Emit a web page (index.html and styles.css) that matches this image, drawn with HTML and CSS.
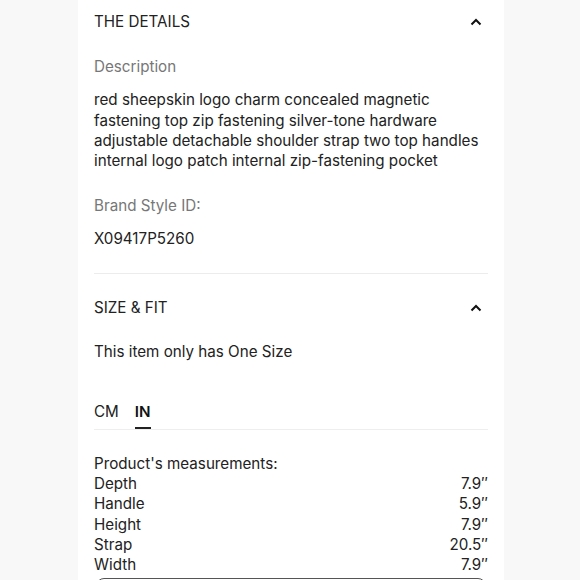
FILE: index.html
```html
<!DOCTYPE html>
<html>
<head>
<meta charset="utf-8">
<link rel="stylesheet" href="styles.css">
</head>
<body>
<div class="panel">
  <section class="details">
    <div class="acc-head first">
      <span class="acc-title">THE DETAILS</span>
      <svg class="chev" width="12" height="8" viewBox="0 0 12 8"><polyline points="1.5,6.5 6,2 10.5,6.5" fill="none" stroke="#111" stroke-width="2"/></svg>
    </div>
    <div class="label">Description</div>
    <p class="desc">red sheepskin logo charm concealed magnetic fastening top zip fastening silver-tone hardware adjustable detachable shoulder strap two top handles internal logo patch internal zip-fastening pocket</p>
    <div class="label label-id">Brand Style ID:</div>
    <div class="value">X09417P5260</div>
  </section>
  <section class="size">
    <div class="acc-head">
      <span class="acc-title">SIZE &amp; FIT</span>
      <svg class="chev" width="12" height="8" viewBox="0 0 12 8"><polyline points="1.5,6.5 6,2 10.5,6.5" fill="none" stroke="#111" stroke-width="2"/></svg>
    </div>
    <div class="note">This item only has One Size</div>
    <div class="tabs">
      <span class="tab">CM</span>
      <span class="tab active">IN</span>
    </div>
    <div class="meas-title">Product's measurements:</div>
    <div class="row"><span>Depth</span><span>7.9″</span></div>
    <div class="row"><span>Handle</span><span>5.9″</span></div>
    <div class="row"><span>Height</span><span>7.9″</span></div>
    <div class="row"><span>Strap</span><span>20.5″</span></div>
    <div class="row"><span>Width</span><span>7.9″</span></div>
    <div class="btn"></div>
  </section>
</div>
</body>
</html>
```
FILE: styles.css
```css
html, body {
  margin: 0;
  padding: 0;
  background: #f8f8f8;
  height: 580px;
  overflow: hidden;
}
body {
  font-family: Inter, "Noto Sans", sans-serif;
  font-size: 15.2px;
  line-height: 20.3px;
  color: #222;
}
.panel {
  margin-left: 78px;
  width: 426px;
  box-sizing: border-box;
  padding: 0 16px;
  background: #fff;
  height: 580px;
}
.details {
  border-bottom: 1px solid #ececec;
  padding-bottom: 24px;
}
.acc-head {
  display: flex;
  justify-content: space-between;
  align-items: center;
  height: 44px;
  margin-top: 12px;
}
.acc-head.first {
  margin-top: 0;
}
.chev {
  margin-right: 6px;
}
.label {
  color: #777;
  margin-top: 13px;
}
.label-id {
  margin-top: 25px;
}
.desc {
  margin: 13px 0 0;
}
.value {
  margin-top: 12px;
}
.note {
  margin-top: 12px;
}
.tabs {
  display: flex;
  gap: 16px;
  margin-top: 40px;
  border-bottom: 1px solid #eeeeee;
  padding-bottom: 6px;
}
.tab {
  position: relative;
}
.tab.active {
  font-weight: 600;
  color: #111;
}
.tab.active::after {
  content: "";
  position: absolute;
  left: 0;
  right: 0;
  bottom: -6px;
  height: 2px;
  background: #222;
}
.meas-title {
  margin-top: 24px;
}
.row {
  display: flex;
  justify-content: space-between;
}
.btn {
  margin: 3px 2px 0;
  height: 40px;
  border: 1.5px solid #555;
  border-radius: 8px;
}
```
